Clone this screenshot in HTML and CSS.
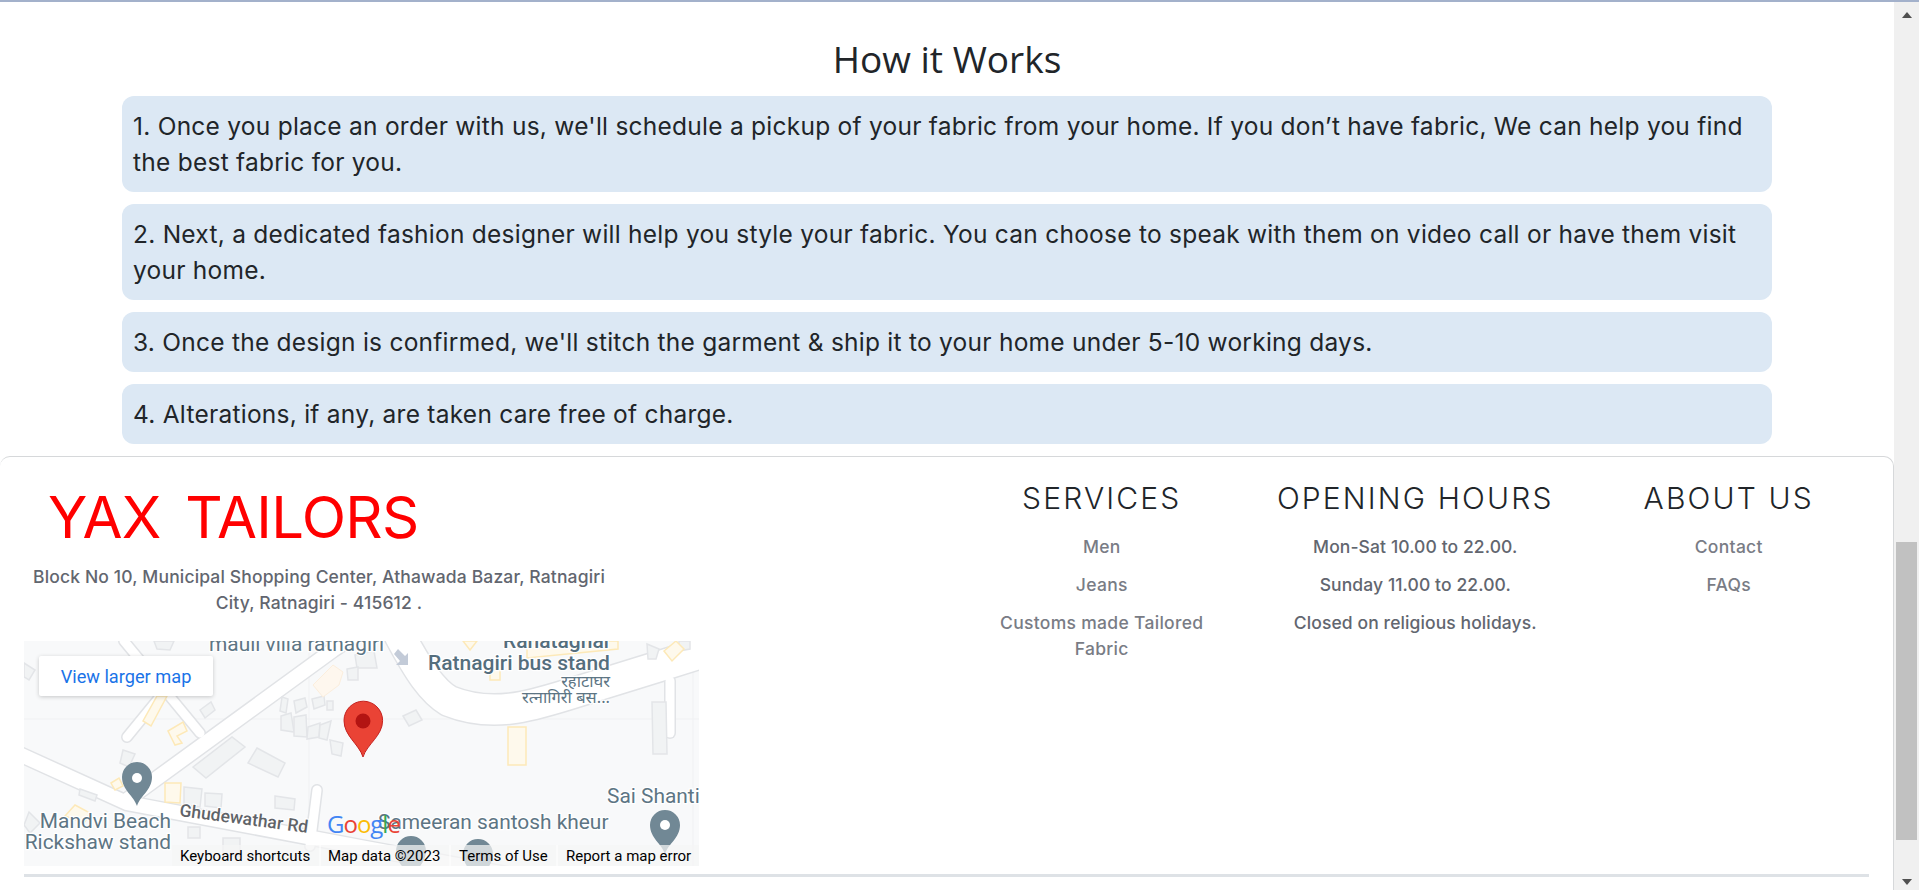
FILE: index.html
```html
<!DOCTYPE html>
<html lang="en">
<head>
<meta charset="utf-8">
<title>How it Works - Yax Tailors</title>
<link rel="stylesheet" href="styles.css">
</head>
<body>
<div class="topline"></div>
<div class="layout">
  <main class="page">
    <section class="how">
      <h2 class="how-title">How it Works</h2>
      <p class="step">1. Once you place an order with us, we'll schedule a pickup of your fabric from your home. If you don’t have fabric, We can help you find the best fabric for you.</p>
      <p class="step">2. Next, a dedicated fashion designer will help you style your fabric. You can choose to speak with them on video call or have them visit your home.</p>
      <p class="step">3. Once the design is confirmed, we'll stitch the garment &amp; ship it to your home under 5-10 working days.</p>
      <p class="step">4. Alterations, if any, are taken care free of charge.</p>
    </section>
    <footer class="footer">
      <div class="footer-main">
        <div class="brand">
          <h1 class="logo">YAX TAILORS</h1>
          <p class="address">Block No 10, Municipal Shopping Center, Athawada Bazar, Ratnagiri City, Ratnagiri - 415612 .</p>
          <div class="map">
            <svg class="map-svg" viewBox="0 0 675 225" width="675" height="225" aria-label="Map">
              <rect class="m-bg" width="675" height="225"/>
              <path class="m-grid" d="M0 78H675M285 0V225M669 0V225"/>
              <g class="m-casing">
                <path class="w14" d="M103 159L309 9L345-15"/>
                <path class="w14" d="M-5 113L103 162L336 206L520 240"/>
                <path class="w30" d="M376-5C395 30 408 50 425 60C470 78 510 64 549 52L633 26L690 8"/>
                <path class="w10" d="M103 96L139 52"/>
                <path class="w10" d="M100 0L176 92"/>
                <path class="w10" d="M293 149L286 205"/>
                <path class="w10" d="M646 40L646 92"/>
              </g>
              <g class="m-road">
                <path class="w14" d="M103 159L309 9L345-15"/>
                <path class="w14" d="M-5 113L103 162L336 206L520 240"/>
                <path class="w30" d="M376-5C395 30 408 50 425 60C470 78 510 64 549 52L633 26L690 8"/>
                <path class="w10" d="M103 96L139 52"/>
                <path class="w10" d="M100 0L176 92"/>
                <path class="w10" d="M293 149L286 205"/>
                <path class="w10" d="M646 40L646 92"/>
              </g>
              <g class="m-build">
                <path d="M0 22L11 29L5 39L0 36Z"/>
                <path d="M176 69L187 61L191 69L181 77Z"/>
                <path d="M258 56L264 58L262 72L256 70Z"/>
                <path d="M270 60L281 57L283 66L272 72Z"/>
                <path d="M288 58L300 55L301 64L290 68Z"/>
                <path d="M303 60L309 60L309 69L303 69Z"/>
                <path d="M257 75L267 72L270 91L257 89Z"/>
                <path d="M270 76L282 74L283 96L270 95Z"/>
                <path d="M284 86L296 82L295 96L283 98Z"/>
                <path d="M296 84L307 80L303 99L295 97Z"/>
                <path d="M306 99L319 102L317 115L308 113Z"/>
                <path d="M379 75L392 69L398 79L385 85Z"/>
                <path d="M233 107L261 122L254 136L224 122Z"/>
                <path d="M169 126L208 96L221 106L182 137Z"/>
                <path d="M99 109L111 113L105 126L96 122Z"/>
                <path d="M160 146L178 148L176 166L160 164Z"/>
                <path d="M181 152L198 153L197 167L181 165Z"/>
                <path d="M251 155L271 158L270 169L251 167Z"/>
                <path d="M628 61L642 61L643 113L629 113Z"/>
                <path d="M164 186L176 186L176 197L164 197Z"/>
                <path d="M199 197L216 197L216 215L199 215Z"/>
                <path d="M5 171L16 182L6 192L0 184Z"/>
                <path d="M56 148L73 154L71 160L55 154Z"/>
                <path d="M331 14L350 10L353 27L333 27Z"/>
                <path d="M323 28L334 26L334 39L324 39Z"/>
                <path d="M623 3L635 8L632 18L624 18Z"/>
                <path d="M655 0L666 0L666 8L655 10Z"/>
                <path d="M130 0L150 0L146 9L133 8Z"/>
              </g>
              <g class="m-yellow-soft">
                <path d="M309 24L319 31L315 44L299 56L289 44Z"/>
              </g>
              <g class="m-yellow">
                <path d="M143 55L133 55L119 80L127 85Z"/>
                <path d="M144 90L159 81L163 90L153 95L158 102L151 104Z"/>
                <path d="M87 142L95 137L99 145L91 149Z"/>
                <path d="M141 142L157 142L156 162L141 161Z"/>
                <path d="M484 86L502 86L502 124L484 124Z"/>
                <path d="M41 175L51 164L66 172L60 182L50 178Z"/>
                <path d="M503 0L594 0L594 8L503 17Z"/>
                <path d="M439 0L453 0L446 9Z"/>
                <path d="M466 29L476 29L476 39L466 39Z"/>
                <path d="M640 10L652 0L660 8L648 20Z"/>
              </g>
              <path class="m-arrow" d="M374 8L381 15L384 12L384 24L372 24L376 20L370 13Z"/>
              <g class="m-label">
                <text x="185" y="10" class="lb">mauli villa ratnagiri</text>
                <text x="479" y="7" class="lb med">Rahatagnar</text>
                <text x="404" y="29" class="lb med">Ratnagiri bus stand</text>
                <text x="586" y="46" class="lb hi">रहाटाघर</text>
                <text x="586" y="62" class="lb hi">रत्नागिरी बस...</text>
                <text x="147" y="187" class="lb end">Mandvi Beach</text>
                <text x="147" y="208" class="lb end">Rickshaw stand</text>
                <text x="583" y="162" class="lb">Sai Shanti</text>
                <text x="354" y="188" class="lb">Sameeran santosh kheur</text>
                <text x="155" y="175" class="road-name" transform="rotate(7.5 155 175)">Ghudewathar Rd</text>
              </g>
              <g class="m-pin">
                <path d="M113 165C110 155 98 149 98 136A15 15 0 1 1 128 136C128 149 116 155 113 165Z"/>
                <path d="M641 213C638 203 626 197 626 184A15 15 0 1 1 656 184C656 197 644 203 641 213Z"/>
                <path d="M387 239C384 229 372 223 372 210A15 15 0 1 1 402 210C402 223 390 229 387 239Z"/>
                <path d="M454 242C451 232 439 226 439 213A15 15 0 1 1 469 213C469 226 457 232 454 242Z"/>
              </g>
              <g class="m-hole">
                <circle cx="113" cy="137" r="5"/>
                <circle cx="641" cy="184" r="5"/>
              </g>
              <path class="pin-red" d="M339 116C335 103 320 95 320 79.5A19.3 19.3 0 1 1 358.6 79.5C358.6 95 343 103 339 116Z"/>
              <circle class="pin-dot" cx="339" cy="80" r="7.5"/>
              <text x="303" y="192" class="glogo"><tspan class="g-b">G</tspan><tspan class="g-r">o</tspan><tspan class="g-y">o</tspan><tspan class="g-b">g</tspan><tspan class="g-g">l</tspan><tspan class="g-r">e</tspan></text>
              <rect class="m-attr" x="148" y="204" width="527" height="21"/>
              <path class="m-attr-sep" d="M296 204V225M426 204V225M533 204V225"/>
              <text x="156" y="220" class="attr">Keyboard shortcuts</text>
              <text x="304" y="220" class="attr">Map data ©2023</text>
              <text x="435" y="220" class="attr">Terms of Use</text>
              <text x="542" y="220" class="attr">Report a map error</text>
            </svg>
            <a class="map-link">View larger map</a>
          </div>
        </div>
        <div class="cols">
          <div class="col">
            <h3 class="col-title">SERVICES</h3>
            <p class="col-item">Men</p>
            <p class="col-item">Jeans</p>
            <p class="col-item">Customs made Tailored Fabric</p>
          </div>
          <div class="col">
            <h3 class="col-title">OPENING HOURS</h3>
            <p class="col-item strong">Mon-Sat 10.00 to 22.00.</p>
            <p class="col-item strong">Sunday 11.00 to 22.00.</p>
            <p class="col-item strong">Closed on religious holidays.</p>
          </div>
          <div class="col">
            <h3 class="col-title">ABOUT US</h3>
            <p class="col-item">Contact</p>
            <p class="col-item">FAQs</p>
          </div>
        </div>
      </div>
      <hr class="rule">
    </footer>
  </main>
  <aside class="scrollbar" aria-hidden="true">
    <div class="arrow up"></div>
    <div class="track"><div class="thumb"></div></div>
    <div class="arrow down"></div>
  </aside>
</div>
</body>
</html>
```
FILE: styles.css
```css
* { box-sizing: border-box; }
html, body { margin: 0; height: 890px; overflow: hidden; background: #fff; }
body { font-family: Inter, "Noto Sans", sans-serif; color: #212529; }
.topline { height: 2px; background: #a3b1cb; }
.layout { display: flex; height: 888px; }
.page { flex: 1; min-width: 0; }

.how { padding: 0 122px 12px; }
.how-title { margin: 0; height: 94px; padding-top: 33px; text-align: center; font: 400 37px/48px "Open Sans", sans-serif; color: #212529; }
.step { margin: 0 0 12px; padding: 12px 11px; background: #dce8f4; border-radius: 12px; font-size: 24.5px; line-height: 36px; letter-spacing: 0.25px; }
.step:last-child { margin-bottom: 0; }

.footer { border: 1px solid #d6d8da; border-bottom: 0; border-left: 0; border-radius: 10px 10px 0 0; height: 434px; padding: 0 24px; }
.footer-main { display: flex; height: 417px; }
.brand { width: 675px; flex: none; }
.logo { margin: 0; padding: 25px 0 0 24px; height: 105px; font-size: 58px; font-weight: 400; line-height: 70px; color: #f00; letter-spacing: -0.7px; word-spacing: 9px; white-space: pre; }
.address { margin: 0; width: 590px; height: 79px; padding-top: 2px; text-align: center; font-size: 17.5px; font-weight: 500; line-height: 26px; color: #62666f; letter-spacing: 0.15px; }

.map { position: relative; width: 675px; height: 225px; overflow: hidden; }
.map-svg { display: block; }
.map-link { position: absolute; left: 15px; top: 15px; width: 174px; height: 40px; display: flex; align-items: center; justify-content: center; background: #fff; border-radius: 2px; box-shadow: 0 1px 4px rgba(0,0,0,.2); font: 400 18.2px Roboto, sans-serif; color: #1a73e8; }

.m-bg { fill: #f8f9fa; }
.m-grid { stroke: #f0f1f3; stroke-width: 1; fill: none; }
.m-casing path, .m-road path { fill: none; stroke-linecap: round; }
.m-casing path { stroke: #e1e3e6; }
.m-road path { stroke: #fff; }
.m-casing .w14 { stroke-width: 17; }
.m-road .w14 { stroke-width: 14; }
.m-casing .w30 { stroke-width: 33; }
.m-road .w30 { stroke-width: 30; }
.m-casing .w10 { stroke-width: 12; }
.m-road .w10 { stroke-width: 9; }
.m-build path { fill: #f1f3f4; stroke: #e3e5e8; stroke-width: 1.5; }
.m-yellow path { fill: #fef9ec; stroke: #fde9b8; stroke-width: 1.5; }
.m-yellow-soft path { fill: #fef7ee; stroke: #fbeedd; stroke-width: 1; }
.m-arrow { fill: #c3cbd8; }
.lb { font: 400 20.9px Roboto, sans-serif; fill: #5d7584; stroke: #fff; stroke-width: 2.5px; paint-order: stroke; }
.lb.med { font-weight: 500; font-size: 21px; fill: #546e7d; }
.lb.end { text-anchor: end; }
.lb.hi { font: 400 16.5px "Noto Sans", "DejaVu Sans", sans-serif; text-anchor: end; }
.road-name { font: 500 17.5px Roboto, sans-serif; fill: #5f6368; stroke: #fff; stroke-width: 2px; paint-order: stroke; }
.m-pin path { fill: #718895; }
.m-hole circle { fill: #fff; }
.pin-red { fill: #ea4335; stroke: #c5221f; stroke-width: 1; }
.pin-dot { fill: #b31412; }
.glogo { font: 500 24px "Open Sans", Roboto, sans-serif; letter-spacing: -1px; }
.g-b { fill: #4285f4; }
.g-r { fill: #ea4335; }
.g-y { fill: #fbbc05; }
.g-g { fill: #34a853; }
.m-attr { fill: rgba(245,245,245,.72); }
.m-attr-sep { stroke: #fff; stroke-width: 1; }
.attr { font: 400 15px Roboto, sans-serif; fill: #000; }

.cols { flex: 1; display: grid; grid-template-columns: repeat(3, 313.5px); margin-left: 246px; padding-top: 23px; }
.col { padding: 0 30px; text-align: center; min-width: 0; }
.col-title { margin: 0 -30px 18px; font-size: 30px; line-height: 36px; font-weight: 300; letter-spacing: 2.15px; color: #212529; }
.col-item { margin: 0 0 12px; font-size: 17.5px; font-weight: 500; line-height: 26px; color: #797c85; letter-spacing: 0.3px; }
.col-item.strong { color: #62666f; letter-spacing: 0.1px; }

.rule { margin: 0; height: 3px; border: 0; background: #dee2e6; width: 1845px; }

.scrollbar { width: 25px; flex: none; display: flex; flex-direction: column; background: #f0f0f0; }
.arrow { flex: none; display: flex; align-items: center; justify-content: center; }
.arrow.up { height: 26px; }
.arrow.down { height: 16px; }
.arrow.up::before { content: ""; border: solid transparent; border-width: 0 5.5px 6px; border-bottom-color: #505050; }
.arrow.down::before { content: ""; border: solid transparent; border-width: 6px 5.5px 0; border-top-color: #505050; }
.track { flex: 1; padding: 514px 2px 0; }
.thumb { height: 298px; background: #c1c1c1; }
```
